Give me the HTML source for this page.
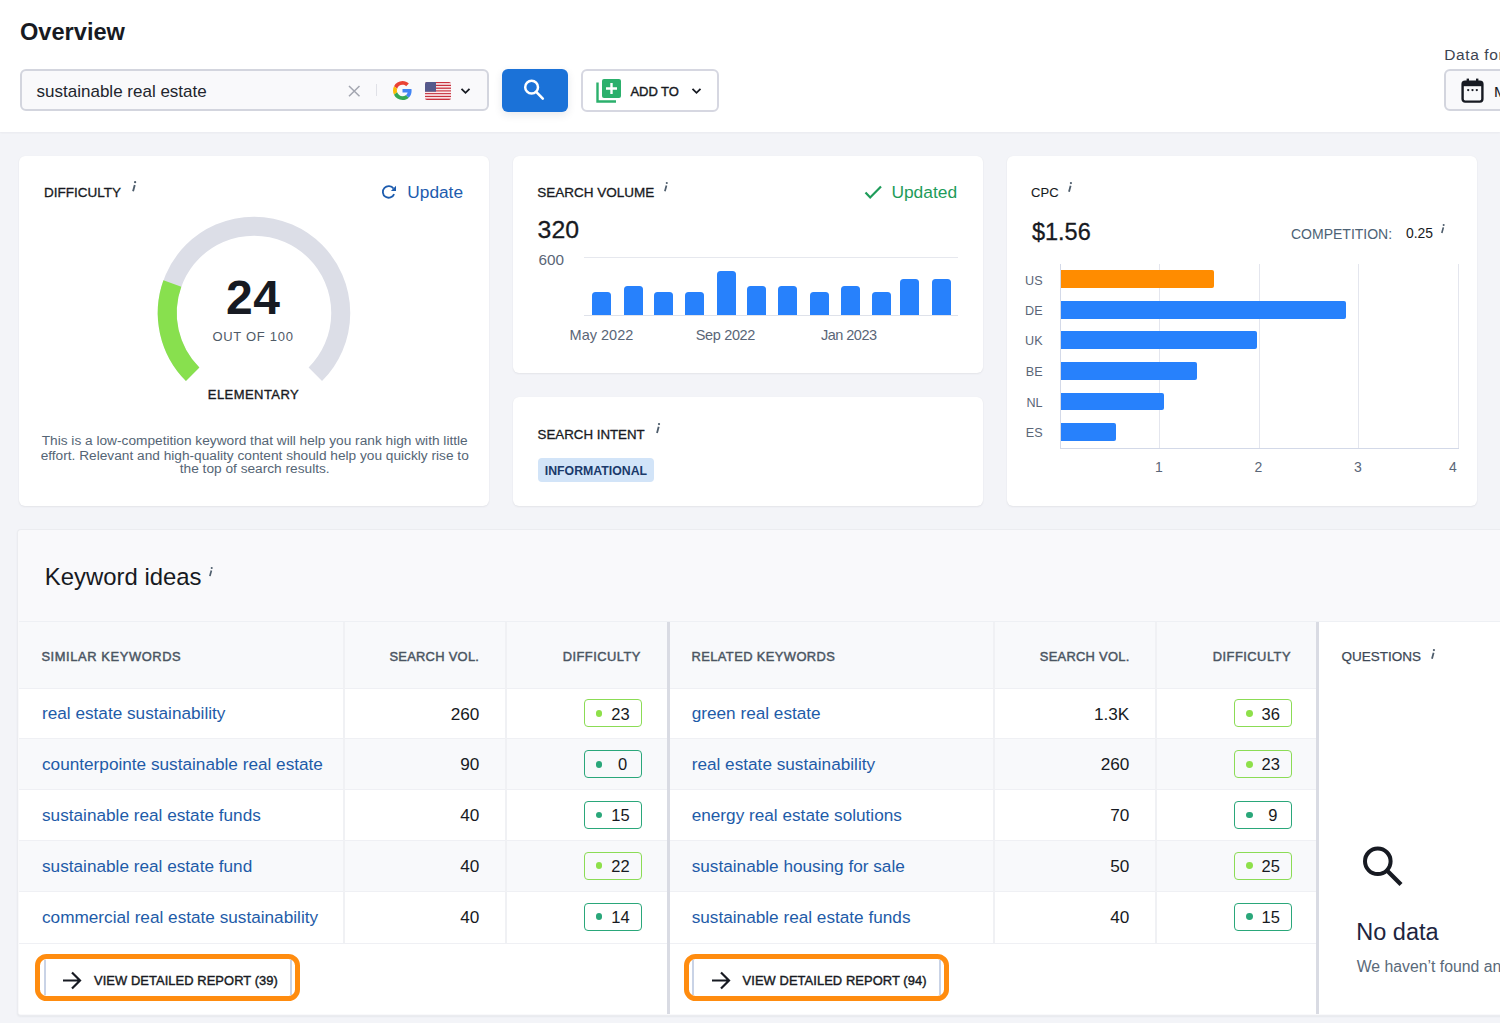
<!DOCTYPE html>
<html><head><meta charset="utf-8"><title>Overview</title>
<style>
html,body{margin:0;padding:0;}
body{width:1500px;height:1023px;position:relative;overflow:hidden;background:#f3f4f8;font-family:"Liberation Sans",sans-serif;}
.t{position:absolute;line-height:1;white-space:nowrap;}
.r{position:absolute;}
</style></head><body>
<div class="r" style="left:0px;top:131px;width:1500px;height:892px;background:#f3f4f8;"></div>
<div class="r" style="left:0px;top:0px;width:1500px;height:131.5px;background:#ffffff;box-shadow:0 1px 2px rgba(30,35,50,0.05);z-index:0;"></div>
<div class="t" style="top:21.32px;font-size:23.6px;color:#171a22;font-weight:700;left:20.00px;">Overview</div>
<div class="r" style="left:20px;top:69px;width:469px;height:42px;background:#f9f9fb;border:2px solid #d3d5de;border-radius:6px;box-sizing:border-box;"></div>
<div class="t" style="top:83.11px;font-size:17px;color:#22252d;left:36.60px;">sustainable real estate</div>
<svg class="r" style="left:348px;top:84.5px" width="12.5" height="12" viewBox="0 0 12.5 12"><path d="M1 1L11.5 11.3M11.5 1L1 11.3" stroke="#a3a6b0" stroke-width="1.5" fill="none"/></svg>
<div class="r" style="left:376px;top:84px;width:1px;height:12px;background:#e0e1e7;"></div>
<svg class="r" style="left:393px;top:81px" width="19" height="19" viewBox="0 0 48 48">
<path fill="#EA4335" d="M24 9.5c3.54 0 6.71 1.22 9.21 3.6l6.85-6.85C35.9 2.38 30.47 0 24 0 14.62 0 6.51 5.38 2.56 13.22l7.98 6.19C12.43 13.72 17.74 9.5 24 9.5z"/>
<path fill="#4285F4" d="M46.98 24.55c0-1.57-.15-3.09-.38-4.55H24v9.02h12.94c-.58 2.96-2.26 5.48-4.78 7.18l7.73 6c4.51-4.18 7.09-10.36 7.09-17.65z"/>
<path fill="#FBBC05" d="M10.53 28.59c-.48-1.45-.76-2.99-.76-4.59s.27-3.14.76-4.59l-7.98-6.19C.92 16.46 0 20.12 0 24c0 3.88.92 7.54 2.56 10.78l7.97-6.19z"/>
<path fill="#34A853" d="M24 48c6.48 0 11.93-2.13 15.89-5.81l-7.73-6c-2.15 1.45-4.92 2.3-8.16 2.3-6.26 0-11.57-4.22-13.47-9.91l-7.98 6.19C6.51 42.62 14.62 48 24 48z"/>
</svg>
<svg class="r" style="left:424.5px;top:81.5px;border-radius:2px" width="26" height="18" viewBox="0 0 26 18"><rect x="0" y="0.000" width="26" height="1.385" fill="#c8323f"/><rect x="0" y="1.385" width="26" height="1.385" fill="#fbeaec"/><rect x="0" y="2.769" width="26" height="1.385" fill="#c8323f"/><rect x="0" y="4.154" width="26" height="1.385" fill="#fbeaec"/><rect x="0" y="5.538" width="26" height="1.385" fill="#c8323f"/><rect x="0" y="6.923" width="26" height="1.385" fill="#fbeaec"/><rect x="0" y="8.308" width="26" height="1.385" fill="#c8323f"/><rect x="0" y="9.692" width="26" height="1.385" fill="#fbeaec"/><rect x="0" y="11.077" width="26" height="1.385" fill="#c8323f"/><rect x="0" y="12.462" width="26" height="1.385" fill="#fbeaec"/><rect x="0" y="13.846" width="26" height="1.385" fill="#c8323f"/><rect x="0" y="15.231" width="26" height="1.385" fill="#fbeaec"/><rect x="0" y="16.615" width="26" height="1.385" fill="#c8323f"/><rect x="0" y="0" width="11" height="9.7" fill="#565a8c"/></svg>
<svg class="r" style="left:460px;top:86.5px" width="11" height="8" viewBox="0 0 11 8"><path d="M1.5 1.8L5.5 5.8L9.5 1.8" stroke="#171a22" stroke-width="1.8" fill="none"/></svg>
<div class="r" style="left:502px;top:69px;width:66px;height:43px;background:#1b72d8;border-radius:6px;box-shadow:0 3px 8px rgba(30,40,70,0.10);"></div>
<svg class="r" style="left:520px;top:76px" width="30" height="30" viewBox="0 0 30 30"><circle cx="11.6" cy="11.2" r="6.4" stroke="#fff" stroke-width="2.5" fill="none"/><path d="M16.2 15.9L22.8 22.6" stroke="#fff" stroke-width="2.6" stroke-linecap="round"/></svg>
<div class="r" style="left:581px;top:69px;width:138px;height:43px;background:#ffffff;border:2px solid #d6d7e1;border-radius:6px;box-sizing:border-box;"></div>
<svg class="r" style="left:595px;top:77px" width="28" height="27" viewBox="0 0 28 27"><path d="M2.5 5.5V24.5H21" stroke="#2bb06c" stroke-width="2.4" fill="none"/><rect x="7" y="2" width="19" height="19" rx="2" fill="#2bb06c"/><path d="M16.5 6V17M11 11.5H22" stroke="#fff" stroke-width="2.4"/></svg>
<div class="t" style="top:84.80px;font-size:13px;color:#171a22;letter-spacing:-0.068px;left:630.50px;-webkit-text-stroke:0.4px #171a22;">ADD TO</div>
<svg class="r" style="left:690.5px;top:87px" width="11" height="8" viewBox="0 0 11 8"><path d="M1.5 1.8L5.5 5.8L9.5 1.8" stroke="#171a22" stroke-width="1.8" fill="none"/></svg>
<div class="t" style="top:47.28px;font-size:15.5px;color:#3d4452;letter-spacing:0.6px;left:1444.30px;">Data for:</div>
<div class="r" style="left:1444px;top:69px;width:86px;height:42px;background:#f9f9fb;border:2px solid #d3d5de;border-radius:6px;box-sizing:border-box;"></div>
<svg class="r" style="left:1461px;top:78px" width="23" height="25" viewBox="0 0 23 25"><rect x="1.6" y="3.6" width="19.8" height="20" rx="2.5" stroke="#171a22" stroke-width="2.4" fill="none"/><rect x="1.6" y="3.6" width="19.8" height="4.6" fill="#171a22"/><rect x="5.6" y="0.6" width="2.4" height="4" fill="#171a22"/><rect x="15" y="0.6" width="2.4" height="4" fill="#171a22"/><circle cx="7.2" cy="12.1" r="1.15" fill="#171a22"/><circle cx="11.5" cy="12.1" r="1.15" fill="#171a22"/><circle cx="15.8" cy="12.1" r="1.15" fill="#171a22"/></svg>
<div class="t" style="top:83.88px;font-size:15.5px;color:#171a22;left:1494.00px;">May 2023</div>
<div class="r" style="left:19px;top:156px;width:470px;height:350px;background:#ffffff;border-radius:6px;box-shadow:0 1px 2px rgba(40,44,60,0.07),0 0 1px rgba(40,44,60,0.06);"></div>
<div class="r" style="left:513px;top:156px;width:470px;height:217px;background:#ffffff;border-radius:6px;box-shadow:0 1px 2px rgba(40,44,60,0.07),0 0 1px rgba(40,44,60,0.06);"></div>
<div class="r" style="left:513px;top:397px;width:470px;height:109px;background:#ffffff;border-radius:6px;box-shadow:0 1px 2px rgba(40,44,60,0.07),0 0 1px rgba(40,44,60,0.06);"></div>
<div class="r" style="left:1007px;top:156px;width:469.5px;height:350px;background:#ffffff;border-radius:6px;box-shadow:0 1px 2px rgba(40,44,60,0.07),0 0 1px rgba(40,44,60,0.06);"></div>
<div class="t" style="top:185.97px;font-size:13.5px;color:#171a22;left:43.90px;-webkit-text-stroke:0.3px #171a22;">DIFFICULTY</div>
<svg class="r" style="left:130.80px;top:180.30px" width="8" height="13" viewBox="-1 -1 8.00 13.00"><circle cx="3.1" cy="1.15" r="1.15" fill="#4e5d6c"/><path d="M2.75 3.9L1.05 10.2" stroke="#4e5d6c" stroke-width="1.85"/></svg>
<svg class="r" style="left:381px;top:184px" width="16" height="16" viewBox="0 0 16 16"><path d="M13.12 10.09A5.85 5.85 0 1 1 12.49 4.54" stroke="#1d5cae" stroke-width="1.8" fill="none"/><path d="M15 1.7L15 6.9L9.9 6.9Z" fill="#1d5cae"/></svg>
<div class="t" style="top:184.16px;font-size:17.3px;color:#1d5cae;left:407.30px;">Update</div>
<svg class="r" style="left:0;top:0" width="500" height="500"><path d="M192.66 374.24 A86.75 86.75 0 1 1 315.34 374.24" stroke="#dcdee7" stroke-width="19" fill="none"/><path d="M192.66 374.24 A86.75 86.75 0 0 1 172.38 283.51" stroke="#88e04e" stroke-width="19" fill="none"/></svg>
<div class="t" style="top:274.17px;font-size:48px;color:#171a22;font-weight:700;letter-spacing:0.6px;left:-146.80px;width:800px;text-align:center;">24</div>
<div class="t" style="top:330.20px;font-size:13px;color:#4f5a67;letter-spacing:0.703px;left:-147.00px;width:800px;text-align:center;">OUT OF 100</div>
<div class="t" style="top:387.70px;font-size:13px;color:#171a22;letter-spacing:0.452px;left:-146.50px;width:800px;text-align:center;-webkit-text-stroke:0.35px #171a22;">ELEMENTARY</div>
<div class="t" style="top:434.40px;font-size:13.7px;color:#556575;left:-145.30px;width:800px;text-align:center;">This is a low-competition keyword that will help you rank high with little</div>
<div class="t" style="top:448.80px;font-size:13.7px;color:#556575;left:-145.30px;width:800px;text-align:center;">effort. Relevant and high-quality content should help you quickly rise to</div>
<div class="t" style="top:462.30px;font-size:13.7px;color:#556575;left:-145.30px;width:800px;text-align:center;">the top of search results.</div>
<div class="t" style="top:185.97px;font-size:13.5px;color:#171a22;left:537.30px;-webkit-text-stroke:0.3px #171a22;">SEARCH VOLUME</div>
<svg class="r" style="left:663.00px;top:181.00px" width="8" height="13" viewBox="-1 -1 8.67 14.08"><circle cx="3.1" cy="1.15" r="1.15" fill="#4e5d6c"/><path d="M2.75 3.9L1.05 10.2" stroke="#4e5d6c" stroke-width="1.85"/></svg>
<svg class="r" style="left:864px;top:185px" width="19" height="15" viewBox="0 0 19 15"><path d="M1.5 7.5L6.2 12.5L17 1.5" stroke="#1e9c5a" stroke-width="2.2" fill="none"/></svg>
<div class="t" style="top:183.57px;font-size:17.4px;color:#1e9c5a;left:891.40px;">Updated</div>
<div class="t" style="top:217.51px;font-size:24.8px;color:#171a22;left:537.60px;-webkit-text-stroke:0.3px #171a22;">320</div>
<div class="t" style="top:251.55px;font-size:15.3px;color:#5a6677;left:538.40px;">600</div>
<div class="r" style="left:584px;top:257px;width:374px;height:1px;background:#e6e8ee;"></div>
<div class="r" style="left:584px;top:315px;width:374px;height:1px;background:#dfe2ea;"></div>
<div class="r" style="left:592.2px;top:292.4px;width:19.0px;height:22.600000000000023px;background:#2781fc;border-radius:3.5px 3.5px 0 0;"></div>
<div class="r" style="left:623.7px;top:286.1px;width:19.0px;height:28.899999999999977px;background:#2781fc;border-radius:3.5px 3.5px 0 0;"></div>
<div class="r" style="left:653.7px;top:292.4px;width:19.0px;height:22.600000000000023px;background:#2781fc;border-radius:3.5px 3.5px 0 0;"></div>
<div class="r" style="left:685.2px;top:292.4px;width:19.0px;height:22.600000000000023px;background:#2781fc;border-radius:3.5px 3.5px 0 0;"></div>
<div class="r" style="left:716.6px;top:270.5px;width:19.0px;height:44.5px;background:#2781fc;border-radius:3.5px 3.5px 0 0;"></div>
<div class="r" style="left:746.7px;top:286.1px;width:19.0px;height:28.899999999999977px;background:#2781fc;border-radius:3.5px 3.5px 0 0;"></div>
<div class="r" style="left:778.1px;top:286.1px;width:19.0px;height:28.899999999999977px;background:#2781fc;border-radius:3.5px 3.5px 0 0;"></div>
<div class="r" style="left:809.5px;top:292.4px;width:19.0px;height:22.600000000000023px;background:#2781fc;border-radius:3.5px 3.5px 0 0;"></div>
<div class="r" style="left:841px;top:286.1px;width:19px;height:28.899999999999977px;background:#2781fc;border-radius:3.5px 3.5px 0 0;"></div>
<div class="r" style="left:872.4px;top:292.4px;width:19.0px;height:22.600000000000023px;background:#2781fc;border-radius:3.5px 3.5px 0 0;"></div>
<div class="r" style="left:900.3px;top:278.7px;width:19.0px;height:36.30000000000001px;background:#2781fc;border-radius:3.5px 3.5px 0 0;"></div>
<div class="r" style="left:931.7px;top:278.7px;width:19.0px;height:36.30000000000001px;background:#2781fc;border-radius:3.5px 3.5px 0 0;"></div>
<div class="t" style="top:327.83px;font-size:14.5px;color:#5a6677;left:569.60px;">May 2022</div>
<div class="t" style="top:327.83px;font-size:14.5px;color:#5a6677;letter-spacing:-0.355px;left:695.80px;">Sep 2022</div>
<div class="t" style="top:327.83px;font-size:14.5px;color:#5a6677;letter-spacing:-0.523px;left:821.00px;">Jan 2023</div>
<div class="t" style="top:427.84px;font-size:13.3px;color:#171a22;left:537.60px;-webkit-text-stroke:0.3px #171a22;">SEARCH INTENT</div>
<svg class="r" style="left:654.80px;top:422.20px" width="8" height="13" viewBox="-1 -1 8.16 13.25"><circle cx="3.1" cy="1.15" r="1.15" fill="#4e5d6c"/><path d="M2.75 3.9L1.05 10.2" stroke="#4e5d6c" stroke-width="1.85"/></svg>
<div class="r" style="left:537.6px;top:458px;width:116.79999999999995px;height:24px;background:#d2e4f8;border-radius:4px;"></div>
<div class="t" style="top:464.89px;font-size:12.3px;color:#1a3a6b;font-weight:700;left:544.80px;">INFORMATIONAL</div>
<div class="t" style="top:186.30px;font-size:13px;color:#171a22;left:1031.10px;-webkit-text-stroke:0.1px #171a22;">CPC</div>
<svg class="r" style="left:1067.00px;top:180.70px" width="8" height="13" viewBox="-1 -1 8.32 13.52"><circle cx="3.1" cy="1.15" r="1.15" fill="#4e5d6c"/><path d="M2.75 3.9L1.05 10.2" stroke="#4e5d6c" stroke-width="1.85"/></svg>
<div class="t" style="top:221.01px;font-size:23.5px;color:#171a22;left:1031.90px;-webkit-text-stroke:0.3px #171a22;">$1.56</div>
<div class="t" style="top:226.65px;font-size:14px;color:#4d6275;left:1291.00px;">COMPETITION:</div>
<div class="t" style="top:226.73px;font-size:13.9px;color:#171a22;left:1406.00px;">0.25</div>
<svg class="r" style="left:1440.30px;top:223.00px" width="8" height="13" viewBox="-1 -1 8.95 14.54"><circle cx="3.1" cy="1.15" r="1.15" fill="#4e5d6c"/><path d="M2.75 3.9L1.05 10.2" stroke="#4e5d6c" stroke-width="1.85"/></svg>
<div class="r" style="left:1159px;top:264px;width:1px;height:184px;background:#e4e6ee;"></div>
<div class="r" style="left:1258.5px;top:264px;width:1.0px;height:184px;background:#e4e6ee;"></div>
<div class="r" style="left:1358px;top:264px;width:1px;height:184px;background:#e4e6ee;"></div>
<div class="r" style="left:1458px;top:264px;width:1px;height:184px;background:#e4e6ee;"></div>
<div class="r" style="left:1060px;top:264px;width:1px;height:185px;background:#d3d9e8;"></div>
<div class="r" style="left:1060px;top:448px;width:399px;height:1px;background:#d3d9e8;"></div>
<div class="r" style="left:1061px;top:270.3px;width:152.70000000000005px;height:17.80000000000001px;background:#ff8c00;border-radius:0 2px 2px 0;"></div>
<div class="t" style="top:274.53px;font-size:12.6px;color:#5a6677;right:457.40px;text-align:right;">US</div>
<div class="r" style="left:1061px;top:301px;width:284.5999999999999px;height:17.5px;background:#2781fc;border-radius:0 2px 2px 0;"></div>
<div class="t" style="top:305.08px;font-size:12.6px;color:#5a6677;right:457.40px;text-align:right;">DE</div>
<div class="r" style="left:1061px;top:331px;width:196.29999999999995px;height:17.5px;background:#2781fc;border-radius:0 2px 2px 0;"></div>
<div class="t" style="top:335.08px;font-size:12.6px;color:#5a6677;right:457.40px;text-align:right;">UK</div>
<div class="r" style="left:1061px;top:362.3px;width:135.79999999999995px;height:17.5px;background:#2781fc;border-radius:0 2px 2px 0;"></div>
<div class="t" style="top:366.38px;font-size:12.6px;color:#5a6677;right:457.40px;text-align:right;">BE</div>
<div class="r" style="left:1061px;top:393px;width:103.29999999999995px;height:17.19999999999999px;background:#2781fc;border-radius:0 2px 2px 0;"></div>
<div class="t" style="top:396.93px;font-size:12.6px;color:#5a6677;right:457.40px;text-align:right;">NL</div>
<div class="r" style="left:1061px;top:423px;width:55.200000000000045px;height:17.5px;background:#2781fc;border-radius:0 2px 2px 0;"></div>
<div class="t" style="top:427.08px;font-size:12.6px;color:#5a6677;right:457.40px;text-align:right;">ES</div>
<div class="t" style="top:460.15px;font-size:14px;color:#5a6677;left:759.00px;width:800px;text-align:center;">1</div>
<div class="t" style="top:460.15px;font-size:14px;color:#5a6677;left:858.50px;width:800px;text-align:center;">2</div>
<div class="t" style="top:460.15px;font-size:14px;color:#5a6677;left:958.00px;width:800px;text-align:center;">3</div>
<div class="t" style="top:460.15px;font-size:14px;color:#5a6677;left:1053.00px;width:800px;text-align:center;">4</div>
<div class="r" style="left:17px;top:528.5px;width:1513px;height:487.0px;background:#f9f9fb;border:1.5px solid #ebecf0;border-right:none;box-sizing:border-box;border-radius:4px 0 0 4px;box-shadow:0 1px 2px rgba(40,44,60,0.06);"></div>
<div class="t" style="top:564.67px;font-size:23.9px;color:#171a22;left:44.80px;">Keyword ideas</div>
<svg class="r" style="left:207.70px;top:566.30px" width="8" height="13" viewBox="-1 -1 8.85 14.38"><circle cx="3.1" cy="1.15" r="1.15" fill="#4e5d6c"/><path d="M2.75 3.9L1.05 10.2" stroke="#4e5d6c" stroke-width="1.85"/></svg>
<div class="r" style="left:19px;top:622px;width:1298px;height:66px;background:#f8f9fb;"></div>
<div class="r" style="left:1319px;top:622px;width:211px;height:392px;background:#ffffff;"></div>
<div class="r" style="left:19px;top:621px;width:1511px;height:1px;background:#eef0f4;"></div>
<div class="r" style="left:19px;top:688px;width:1298px;height:50px;background:#ffffff;"></div>
<div class="r" style="left:19px;top:688px;width:1298px;height:1px;background:#eff0f4;"></div>
<div class="r" style="left:19px;top:738px;width:1298px;height:51px;background:#f8f9fb;"></div>
<div class="r" style="left:19px;top:738px;width:1298px;height:1px;background:#eff0f4;"></div>
<div class="r" style="left:19px;top:789px;width:1298px;height:51px;background:#ffffff;"></div>
<div class="r" style="left:19px;top:789px;width:1298px;height:1px;background:#eff0f4;"></div>
<div class="r" style="left:19px;top:840px;width:1298px;height:51px;background:#f8f9fb;"></div>
<div class="r" style="left:19px;top:840px;width:1298px;height:1px;background:#eff0f4;"></div>
<div class="r" style="left:19px;top:891px;width:1298px;height:52px;background:#ffffff;"></div>
<div class="r" style="left:19px;top:891px;width:1298px;height:1px;background:#eff0f4;"></div>
<div class="r" style="left:19px;top:943px;width:1298px;height:71px;background:#ffffff;"></div>
<div class="r" style="left:19px;top:943px;width:1298px;height:1px;background:#eff0f4;"></div>
<div class="r" style="left:343px;top:622px;width:2px;height:321px;background:#f0f1f4;"></div>
<div class="r" style="left:505px;top:622px;width:2px;height:321px;background:#f0f1f4;"></div>
<div class="r" style="left:993px;top:622px;width:2px;height:321px;background:#f0f1f4;"></div>
<div class="r" style="left:1155px;top:622px;width:2px;height:321px;background:#f0f1f4;"></div>
<div class="r" style="left:667px;top:622px;width:3px;height:392px;background:#d9dbe3;"></div>
<div class="r" style="left:1316px;top:622px;width:3px;height:392px;background:#d9dbe3;"></div>
<div class="t" style="top:650.68px;font-size:12.9px;color:#4a5562;letter-spacing:0.596px;left:41.40px;-webkit-text-stroke:0.45px #4a5562;">SIMILAR KEYWORDS</div>
<div class="t" style="top:650.68px;font-size:12.9px;color:#4a5562;letter-spacing:0.286px;right:1020.81px;text-align:right;-webkit-text-stroke:0.45px #4a5562;">SEARCH VOL.</div>
<div class="t" style="top:650.68px;font-size:12.9px;color:#4a5562;letter-spacing:0.469px;right:859.13px;text-align:right;-webkit-text-stroke:0.45px #4a5562;">DIFFICULTY</div>
<div class="t" style="top:650.68px;font-size:12.9px;color:#4a5562;letter-spacing:0.408px;left:691.50px;-webkit-text-stroke:0.45px #4a5562;">RELATED KEYWORDS</div>
<div class="t" style="top:650.68px;font-size:12.9px;color:#4a5562;letter-spacing:0.286px;right:370.41px;text-align:right;-webkit-text-stroke:0.45px #4a5562;">SEARCH VOL.</div>
<div class="t" style="top:650.68px;font-size:12.9px;color:#4a5562;letter-spacing:0.469px;right:209.03px;text-align:right;-webkit-text-stroke:0.45px #4a5562;">DIFFICULTY</div>
<div class="t" style="top:705.44px;font-size:17.2px;color:#1e5ba8;left:42.00px;">real estate sustainability</div>
<div class="t" style="top:705.54px;font-size:17.2px;color:#171a22;right:1020.70px;text-align:right;">260</div>
<div class="r" style="left:584.2px;top:699.4px;width:57.5px;height:28px;box-sizing:border-box;border:1.5px solid #8bdc55;border-radius:4px;"></div>
<div class="r" style="left:595.7px;top:710.0px;width:6.8px;height:6.8px;border-radius:50%;background:#8ee04a"></div>
<div class="t" style="top:705.53px;font-size:16.5px;color:#171a22;right:870.30px;text-align:right;">23</div>
<div class="t" style="top:756.24px;font-size:17.2px;color:#1e5ba8;left:42.00px;">counterpointe sustainable real estate</div>
<div class="t" style="top:756.34px;font-size:17.2px;color:#171a22;right:1020.70px;text-align:right;">90</div>
<div class="r" style="left:584.2px;top:750.2px;width:57.5px;height:28px;box-sizing:border-box;border:1.5px solid #2aa77a;border-radius:4px;"></div>
<div class="r" style="left:595.7px;top:760.8px;width:6.8px;height:6.8px;border-radius:50%;background:#2aa77a"></div>
<div class="t" style="top:756.33px;font-size:16.5px;color:#171a22;right:872.80px;text-align:right;">0</div>
<div class="t" style="top:807.04px;font-size:17.2px;color:#1e5ba8;left:42.00px;">sustainable real estate funds</div>
<div class="t" style="top:807.14px;font-size:17.2px;color:#171a22;right:1020.70px;text-align:right;">40</div>
<div class="r" style="left:584.2px;top:801.0px;width:57.5px;height:28px;box-sizing:border-box;border:1.5px solid #2aa77a;border-radius:4px;"></div>
<div class="r" style="left:595.7px;top:811.6px;width:6.8px;height:6.8px;border-radius:50%;background:#2aa77a"></div>
<div class="t" style="top:807.13px;font-size:16.5px;color:#171a22;right:870.30px;text-align:right;">15</div>
<div class="t" style="top:857.84px;font-size:17.2px;color:#1e5ba8;left:42.00px;">sustainable real estate fund</div>
<div class="t" style="top:857.94px;font-size:17.2px;color:#171a22;right:1020.70px;text-align:right;">40</div>
<div class="r" style="left:584.2px;top:851.8px;width:57.5px;height:28px;box-sizing:border-box;border:1.5px solid #8bdc55;border-radius:4px;"></div>
<div class="r" style="left:595.7px;top:862.4px;width:6.8px;height:6.8px;border-radius:50%;background:#8ee04a"></div>
<div class="t" style="top:857.93px;font-size:16.5px;color:#171a22;right:870.30px;text-align:right;">22</div>
<div class="t" style="top:908.64px;font-size:17.2px;color:#1e5ba8;left:42.00px;">commercial real estate sustainability</div>
<div class="t" style="top:908.74px;font-size:17.2px;color:#171a22;right:1020.70px;text-align:right;">40</div>
<div class="r" style="left:584.2px;top:902.6px;width:57.5px;height:28px;box-sizing:border-box;border:1.5px solid #2aa77a;border-radius:4px;"></div>
<div class="r" style="left:595.7px;top:913.2px;width:6.8px;height:6.8px;border-radius:50%;background:#2aa77a"></div>
<div class="t" style="top:908.73px;font-size:16.5px;color:#171a22;right:870.30px;text-align:right;">14</div>
<div class="t" style="top:705.44px;font-size:17.2px;color:#1e5ba8;left:691.70px;">green real estate</div>
<div class="t" style="top:705.54px;font-size:17.2px;color:#171a22;right:370.70px;text-align:right;">1.3K</div>
<div class="r" style="left:1234.3px;top:699.4px;width:57.5px;height:28px;box-sizing:border-box;border:1.5px solid #8bdc55;border-radius:4px;"></div>
<div class="r" style="left:1245.8px;top:710.0px;width:6.8px;height:6.8px;border-radius:50%;background:#8ee04a"></div>
<div class="t" style="top:705.53px;font-size:16.5px;color:#171a22;right:220.20px;text-align:right;">36</div>
<div class="t" style="top:756.24px;font-size:17.2px;color:#1e5ba8;left:691.70px;">real estate sustainability</div>
<div class="t" style="top:756.34px;font-size:17.2px;color:#171a22;right:370.70px;text-align:right;">260</div>
<div class="r" style="left:1234.3px;top:750.2px;width:57.5px;height:28px;box-sizing:border-box;border:1.5px solid #8bdc55;border-radius:4px;"></div>
<div class="r" style="left:1245.8px;top:760.8px;width:6.8px;height:6.8px;border-radius:50%;background:#8ee04a"></div>
<div class="t" style="top:756.33px;font-size:16.5px;color:#171a22;right:220.20px;text-align:right;">23</div>
<div class="t" style="top:807.04px;font-size:17.2px;color:#1e5ba8;left:691.70px;">energy real estate solutions</div>
<div class="t" style="top:807.14px;font-size:17.2px;color:#171a22;right:370.70px;text-align:right;">70</div>
<div class="r" style="left:1234.3px;top:801.0px;width:57.5px;height:28px;box-sizing:border-box;border:1.5px solid #2aa77a;border-radius:4px;"></div>
<div class="r" style="left:1245.8px;top:811.6px;width:6.8px;height:6.8px;border-radius:50%;background:#2aa77a"></div>
<div class="t" style="top:807.13px;font-size:16.5px;color:#171a22;right:222.70px;text-align:right;">9</div>
<div class="t" style="top:857.84px;font-size:17.2px;color:#1e5ba8;left:691.70px;">sustainable housing for sale</div>
<div class="t" style="top:857.94px;font-size:17.2px;color:#171a22;right:370.70px;text-align:right;">50</div>
<div class="r" style="left:1234.3px;top:851.8px;width:57.5px;height:28px;box-sizing:border-box;border:1.5px solid #8bdc55;border-radius:4px;"></div>
<div class="r" style="left:1245.8px;top:862.4px;width:6.8px;height:6.8px;border-radius:50%;background:#8ee04a"></div>
<div class="t" style="top:857.93px;font-size:16.5px;color:#171a22;right:220.20px;text-align:right;">25</div>
<div class="t" style="top:908.64px;font-size:17.2px;color:#1e5ba8;left:691.70px;">sustainable real estate funds</div>
<div class="t" style="top:908.74px;font-size:17.2px;color:#171a22;right:370.70px;text-align:right;">40</div>
<div class="r" style="left:1234.3px;top:902.6px;width:57.5px;height:28px;box-sizing:border-box;border:1.5px solid #2aa77a;border-radius:4px;"></div>
<div class="r" style="left:1245.8px;top:913.2px;width:6.8px;height:6.8px;border-radius:50%;background:#2aa77a"></div>
<div class="t" style="top:908.73px;font-size:16.5px;color:#171a22;right:220.20px;text-align:right;">15</div>
<div class="r" style="left:35px;top:954px;width:265px;height:46.5px;box-sizing:border-box;border:5.8px solid #ff8c0f;border-radius:11.5px;background:#fff"></div>
<div class="r" style="left:43.5px;top:959.5px;width:2px;height:35px;background:#c9d3e6"></div>
<div class="r" style="left:290px;top:959.5px;width:2px;height:35px;background:#c9d3e6"></div>
<svg class="r" style="left:62px;top:970.5px" width="20" height="19" viewBox="0 0 20 19"><path d="M1 9.5H18M10 1.5L18 9.5L10 17.5" stroke="#171a22" stroke-width="2.2" fill="none"/></svg>
<div class="t" style="top:975.38px;font-size:12.9px;color:#171a22;letter-spacing:0.08px;left:94.00px;-webkit-text-stroke:0.4px #171a22;">VIEW DETAILED REPORT (39)</div>
<div class="r" style="left:683.6px;top:954px;width:265px;height:46.5px;box-sizing:border-box;border:5.8px solid #ff8c0f;border-radius:11.5px;background:#fff"></div>
<div class="r" style="left:692.1px;top:959.5px;width:2px;height:35px;background:#c9d3e6"></div>
<div class="r" style="left:938.6px;top:959.5px;width:2px;height:35px;background:#c9d3e6"></div>
<svg class="r" style="left:710.6px;top:970.5px" width="20" height="19" viewBox="0 0 20 19"><path d="M1 9.5H18M10 1.5L18 9.5L10 17.5" stroke="#171a22" stroke-width="2.2" fill="none"/></svg>
<div class="t" style="top:975.38px;font-size:12.9px;color:#171a22;letter-spacing:0.08px;left:742.60px;-webkit-text-stroke:0.4px #171a22;">VIEW DETAILED REPORT (94)</div>
<div class="t" style="top:649.77px;font-size:13.5px;color:#3d4856;left:1341.60px;-webkit-text-stroke:0.25px #3d4856;">QUESTIONS</div>
<svg class="r" style="left:1430.30px;top:648.30px" width="8" height="13" viewBox="-1 -1 8.32 13.52"><circle cx="3.1" cy="1.15" r="1.15" fill="#4e5d6c"/><path d="M2.75 3.9L1.05 10.2" stroke="#4e5d6c" stroke-width="1.85"/></svg>
<svg class="r" style="left:1360px;top:844px" width="46" height="46" viewBox="0 0 46 46"><circle cx="17.8" cy="17.3" r="12.8" stroke="#171a22" stroke-width="4" fill="none"/><path d="M27 26.5L41 40.5" stroke="#171a22" stroke-width="4.2"/></svg>
<div class="t" style="top:920.81px;font-size:23.5px;color:#1d2540;left:1356.30px;">No data</div>
<div class="t" style="top:958.93px;font-size:15.8px;color:#5a6a7a;left:1356.70px;">We haven&#8217;t found any questions</div>
</body></html>
